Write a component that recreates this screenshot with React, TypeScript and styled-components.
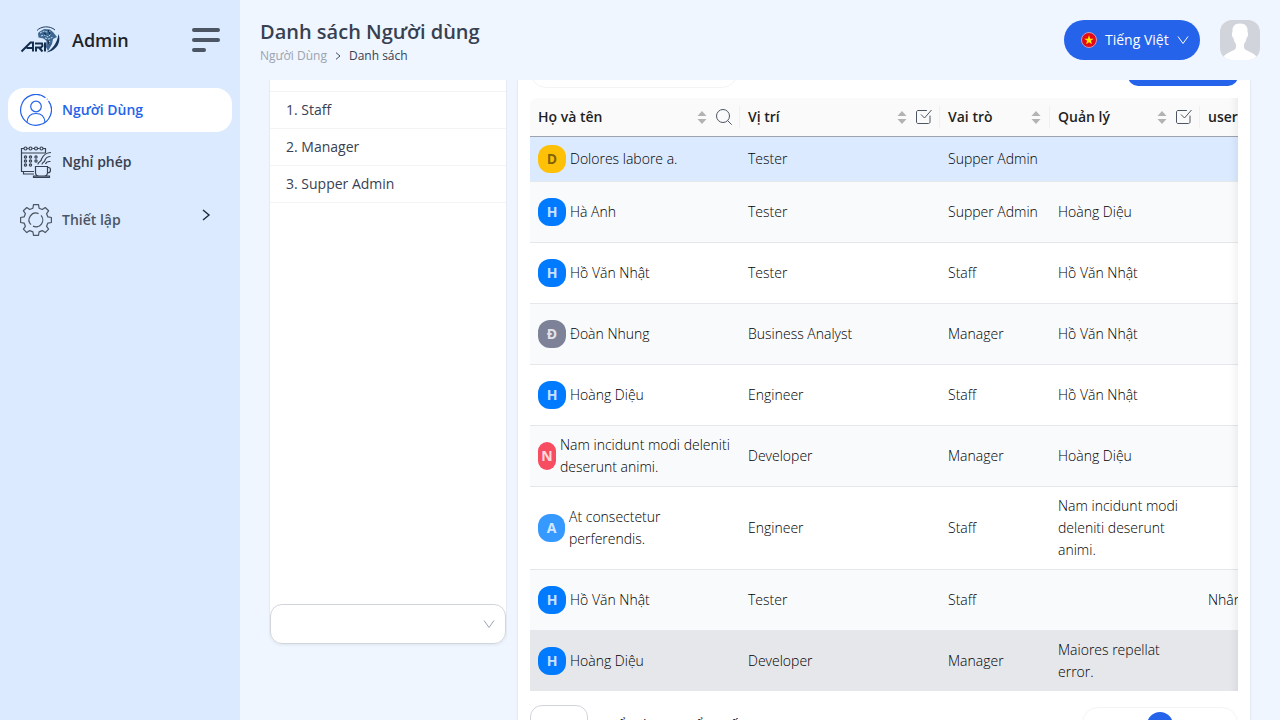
import React from "react";
import styled, { createGlobalStyle } from "styled-components";

const GlobalStyle = createGlobalStyle`
  *, *::before, *::after { box-sizing: border-box; }
  body {
    margin: 0;
    background: #eff6ff;
    color: #1f2937;
    font-family: "Open Sans", "Noto Sans", sans-serif;
    font-size: 14px;
    line-height: 22px;
  }
  button, select, input { font: inherit; color: inherit; }
  svg { display: block; flex: none; }
`;

const Shell = styled.div`
  display: flex;
  height: 100vh;
  overflow: hidden;
`;

const Sidebar = styled.aside`
  flex: none;
  width: 240px;
  background: #dbeafe;
`;

const Brand = styled.div`
  display: flex;
  align-items: center;
  height: 80px;
  padding: 0 20px;
  gap: 12px;
`;

const BrandName = styled.span`
  flex: 1;
  font-size: 18px;
  font-weight: 650;
  line-height: 28px;
  color: #1f2329;
`;

const MenuButton = styled.button`
  display: flex;
  flex-direction: column;
  gap: 6px;
  width: 28px;
  padding: 0;
  border: 0;
  background: none;
`;

const MenuBar = styled.span<{ $short?: boolean }>`
  width: ${(p) => (p.$short ? "14px" : "28px")};
  height: 4px;
  border-radius: 2px;
  background: #4b5563;
`;

const Nav = styled.nav`
  display: flex;
  flex-direction: column;
  gap: 8px;
  padding: 8px;
`;

const NavLink = styled.a<{ $active?: boolean; $tall?: boolean }>`
  display: flex;
  align-items: center;
  gap: 10px;
  height: ${(p) => (p.$tall ? "56px" : "44px")};
  padding: 0 20px 0 12px;
  border-radius: 16px;
  background: ${(p) => (p.$active ? "#ffffff" : "transparent")};
  color: ${(p) => (p.$active ? "#2563eb" : p.$tall ? "#4b5563" : "#374151")};
  font-weight: 650;
  text-decoration: none;
`;

const NavText = styled.span`
  flex: 1;
`;

const NavArrow = styled.span`
  align-self: flex-start;
  padding-top: 17px;
  color: #1f2937;
`;

const Main = styled.main`
  display: flex;
  flex: 1;
  flex-direction: column;
  min-width: 0;
`;

const Header = styled.header`
  display: flex;
  flex: none;
  align-items: center;
  justify-content: space-between;
  height: 80px;
  padding: 0 20px;
`;

const Heading = styled.div`
  padding-top: 4px;
`;

const Title = styled.h1`
  margin: 0;
  font-size: 20px;
  font-weight: 600;
  line-height: 28px;
  color: #374151;
`;

const Crumbs = styled.div`
  display: flex;
  align-items: center;
  gap: 7px;
  font-size: 12px;
  line-height: 20px;
  color: #374151;
`;

const CrumbLink = styled.a`
  color: #9ca3af;
  text-decoration: none;
`;

const HeaderTools = styled.div`
  display: flex;
  align-items: center;
  gap: 20px;
`;

const LanguageButton = styled.button`
  display: flex;
  align-items: center;
  gap: 8px;
  width: 136px;
  height: 40px;
  padding: 0 12px 0 17px;
  border: 0;
  border-radius: 20px;
  background: #2563eb;
  color: #ffffff;
`;

const LanguageName = styled.span`
  flex: 1;
  text-align: left;
  white-space: nowrap;
`;

const ProfileButton = styled.button`
  width: 40px;
  height: 40px;
  padding: 0;
  border: 0;
  border-radius: 12px;
  overflow: hidden;
  background: #d1d5db;
`;

const Content = styled.div`
  display: grid;
  flex: 1;
  grid-template-columns: 236px minmax(0, 1fr);
  align-items: start;
  gap: 12px;
  min-height: 0;
  padding: 0 30px;
  overflow: hidden;
`;

const Card = styled.section`
  background: #ffffff;
  box-shadow: 0 0 0 1px #e5ebf5, 0 1px 3px rgba(0, 0, 0, 0.08);
`;

const RoleCard = styled(Card)`
  display: flex;
  flex-direction: column;
  border-radius: 0 0 12px 12px;
`;

const RoleList = styled.ul`
  height: 524px;
  margin: 0;
  padding: 12px 0 0;
  list-style: none;
`;

const RoleItem = styled.li`
  padding: 8px 16px;
  border-bottom: 1px solid #f3f4f6;
  line-height: 20px;
  font-weight: 500;
  color: #374151;

  &:first-child { box-shadow: 0 -1px 0 #f3f4f6; }
`;

const SelectBox = styled.label<{ $wide?: boolean }>`
  display: flex;
  align-items: center;
  width: ${(p) => (p.$wide ? "100%" : "58px")};
  height: 40px;
  padding-right: 10px;
  border: 1px solid #d1d5db;
  border-radius: 12px;
  background: #ffffff;
  color: #9ca3af;

  select {
    flex: 1;
    min-width: 0;
    height: 100%;
    border: 0;
    background: none;
    appearance: none;
    outline: 0;
  }
`;

const UserCard = styled(Card)`
  padding: 0 12px 20px;
`;

const Toolbar = styled.div`
  display: flex;
  align-items: flex-end;
  justify-content: space-between;
  height: 8px;
  margin-bottom: 10px;
  overflow: hidden;
`;

const SearchInput = styled.input`
  width: 208px;
  height: 40px;
  border: 1px solid #f3f4f6;
  border-radius: 16px;
  background: #ffffff;
`;

const AddButton = styled.button`
  width: 110px;
  height: 36px;
  margin-bottom: 2px;
  border: 0;
  border-radius: 10px;
  background: #2563eb;
`;

const TableFrame = styled.div`
  position: relative;
  overflow: hidden;
  border-radius: 8px 0 0 0;

  &::after {
    content: "";
    position: absolute;
    inset: 0 0 0 auto;
    width: 30px;
    box-shadow: inset -10px 0 8px -8px rgba(5, 5, 5, 0.07);
    pointer-events: none;
  }
`;

const Table = styled.table`
  width: 860px;
  table-layout: fixed;
  border-collapse: separate;
  border-spacing: 0;
`;

const HeadCell = styled.th`
  position: relative;
  height: 39px;
  padding: 0 8px;
  border-bottom: 1px solid #9ca3af;
  background: #fafafa;
  color: #1f1f1f;
  font-weight: 600;
  text-align: left;

  &:not(:last-child)::after {
    content: "";
    position: absolute;
    top: 8px;
    right: 0;
    width: 1px;
    height: 22px;
    background: #f0f0f0;
  }
`;

const HeadContent = styled.div`
  display: flex;
  align-items: center;
  gap: 8px;
`;

const HeadLabel = styled.span`
  flex: 1;
  white-space: nowrap;
`;

const IconButton = styled.button`
  padding: 0;
  border: 0;
  background: none;
  color: #4b5563;
`;

type Tone = "selected" | "striped" | "plain" | "hovered";

const tones: Record<Tone, string> = {
  selected: "#dbeafe",
  striped: "#f9fafb",
  plain: "#ffffff",
  hovered: "#e5e7eb",
};

const Row = styled.tr<{ $tone: Tone; $height: number }>`
  height: ${(p) => p.$height}px;
  background: ${(p) => tones[p.$tone]};
`;

const Cell = styled.td`
  padding: 8px;
  border-bottom: 1px solid #e5e7eb;
  color: #000000;
  font-weight: 300;
  vertical-align: middle;
  white-space: pre-line;

  tr:last-child > & { border-bottom: 0; }
`;

const Person = styled.div`
  display: flex;
  align-items: center;
  gap: 4px;
`;

const Initial = styled.span<{ $color: string; $width: number; $dark?: boolean }>`
  flex: none;
  width: ${(p) => p.$width}px;
  height: 28px;
  border-radius: 12px;
  background: ${(p) => p.$color};
  color: ${(p) => (p.$dark ? "rgba(0, 0, 0, 0.5)" : "rgba(255, 255, 255, 0.8)")};
  font-weight: 700;
  line-height: 28px;
  text-align: center;
`;

const Footer = styled.div`
  display: flex;
  align-items: center;
  gap: 16px;
  padding-top: 14px;
`;

const Summary = styled.span`
  flex: 1;
  color: #111827;
`;

const Pager = styled.div`
  display: flex;
  align-items: center;
  justify-content: space-between;
  width: 156px;
  height: 36px;
  padding: 0 12px;
  border: 1px solid #f3f4f6;
  border-radius: 16px;
`;

const PageButton = styled.button<{ $current?: boolean }>`
  display: grid;
  place-items: center;
  width: ${(p) => (p.$current ? "26px" : "16px")};
  height: 26px;
  padding: 0;
  border: 0;
  border-radius: 13px;
  background: ${(p) => (p.$current ? "#2563eb" : "transparent")};
  color: #93c5fd;
`;

const Chevron = ({ d, size = 12, width = 1 }: { d: string; size?: number; width?: number }) => (
  <svg width={size} height={size} viewBox="0 0 12 12" fill="none" stroke="currentColor" strokeWidth={width}>
    <path d={d} />
  </svg>
);

const DOWN = "M1 2.5 6 9.5 11 2.5";
const RIGHT = "M3 1 9 6 3 11";

const Logo = () => (
  <svg width="40" height="28" viewBox="0 0 40 28" fill="none">
    <path d="M17 4.500C21 0 30 -.5 35 4" stroke="#1b3c66" strokeWidth="1" />
    <path d="M38.500 8c3 8-2 17-12 18.500 6-3.500 10.500-9 12-18.500Z" fill="#17375f" />
    <path d="M19 6 24 3l6 .5 3 2.500 4 5-4 2-1 5-4 7-2-4 .5-6-3-2.500-5-1-.5-4Z" fill="#3f6690" />
    <path d="m20 7 4-2 3 1 4-1M21 10l4-1 3 2 3-3M25 12l4 1 4-2M28 15l3 1M28 19l2-2" stroke="#b6e0f3" strokeWidth="1" strokeDasharray="2 1" />
    <path d="m24 7 2 2m2-5 2 4m-2 6 1 5" stroke="#14304f" strokeWidth="1.200" />
    <path d="m1.500 25.500 9-9h2.500v9M6.500 22h6" stroke="#142e50" strokeWidth="2" />
    <path d="M16 25.500v-4h5l1.500-1.500-.5-2.500h-7M19 21.500l3.500 4M25 16.500v9" stroke="#142e50" strokeWidth="2" />
  </svg>
);

const UserIcon = () => (
  <svg width="32" height="32" viewBox="0 0 32 32" fill="none" stroke="currentColor" strokeWidth="1.200">
    <path d="M25.500 3.700A15.400 15.400 0 1 0 28.500 6.800M26.900 4.900l.5.500" />
    <circle cx="16" cy="12.500" r="5.300" />
    <path d="M7 28.200c.5-5.600 4-8.700 9-8.700s8.500 3.100 9 8.700" />
  </svg>
);

const LeaveIcon = () => (
  <svg width="32" height="32" viewBox="0 0 32 32" fill="none" stroke="currentColor" strokeWidth="1.200">
    <path d="M4 2.500H1.500v23H14M1.500 7h24M25.500 7V2.500H23M3.500 26v2H14M7 2.500h1.500m4 0H14m4 0h1.500" />
    <circle cx="5.500" cy="2.500" r="1.500" />
    <circle cx="10.500" cy="2.500" r="1.500" />
    <circle cx="16" cy="2.500" r="1.500" />
    <circle cx="21.500" cy="2.500" r="1.500" />
    {[11, 15, 19].map((y) =>
      [5.5, 10.5, 16].map((x) =>
        x === 16 && y === 19 ? null : <circle key={`${x}-${y}`} cx={x} cy={y} r="1.100" />
      )
    )}
    <path d="M15.500 20.500h12v6c0 2-1.500 3.500-3.500 3.500h-5c-2 0-3.500-1.500-3.500-3.500v-6ZM27.500 21.500h1c1.500 0 2 1 2 2.500s-1 3-3 3M13.500 30h16v1.300h-16V30Z" />
    <path d="M18 18.500c-.5-3 4-2.500 3.500-5.500 2-4 4-6.500 9.500-6.500M22 18.500c0-2.500 3-2 3-4.500 1-2.500 2.500-3.500 5.500-3.500M25.500 18c1-3 2.500-2.500 5-2.500" />
  </svg>
);

const GearIcon = () => (
  <svg width="32" height="32" viewBox="0 0 32 32" fill="none" stroke="currentColor" strokeWidth="1.200" strokeLinejoin="round">
    <path d="M13.500 .7h5l.6 3.500 3.200 1.300 2.900-2 3.400 3.300-2 2.900 1.300 3.200 3.500.6v5l-3.500.6-1.300 3.200 2 2.900-3.400 3.400-2.900-2-3.200 1.300-.6 3.400h-5l-.6-3.400-3.200-1.300-2.900 2-3.400-3.400 2-2.900-1.300-3.200-3.500-.6v-5l3.500-.6 1.300-3.200-2-2.900L6.800 3.500l2.900 2 3.200-1.300.6-3.500Z" />
    <path d="M18.500 9.600A6.800 6.800 0 0 0 11 20.600M13 22.100a6.800 6.800 0 0 0 8-10.700" />
  </svg>
);

const FlagIcon = () => (
  <svg width="16" height="16" viewBox="0 0 16 16">
    <circle cx="8" cy="8" r="7.500" fill="#e60a17" stroke="#c99ab4" />
    <path d="m8 3.300 1.200 3.400h3.500L9.900 8.800l1 3.500L8 10.200l-2.900 2.100 1-3.500-2.800-2.100h3.500L8 3.300Z" fill="#ffed00" />
  </svg>
);

const ProfileImage = () => (
  <svg width="40" height="40" viewBox="0 0 40 40" fill="#ffffff">
    <path d="M20 3.500c-5.500 0-8 3-7.500 8.500-1.300 1-.4 5.500 1 6 .3 3 1.300 4.500 2.500 6v4c-2 3.500-10 4-12.500 9L3 40h34l-.5-3c-2.500-5-10.500-5.500-12.500-9v-4c1.200-1.500 2.200-3 2.500-6 1.400-.5 2.300-5 1-6C28 6.500 25.500 3.500 20 3.500Z" />
  </svg>
);

const SortIcon = () => (
  <svg width="12" height="13" viewBox="0 0 12 13" fill="#b3b3b3">
    <path d="M6 0 10.500 5h-9ZM1.500 8h9L6 13Z" />
  </svg>
);

const SearchIcon = () => (
  <svg width="16" height="16" viewBox="0 0 16 16" fill="none" stroke="currentColor">
    <circle cx="7" cy="7" r="6.500" />
    <path d="m11.700 11.700 4 4" />
  </svg>
);

const CheckIcon = () => (
  <svg width="16" height="16" viewBox="0 0 16 16" fill="none" stroke="currentColor">
    <path d="M10.500 1.500h-8.500c-.8 0-1.500.7-1.500 1.500v10c0 .8.7 1.500 1.500 1.500h10.500c.8 0 1.500-.7 1.500-1.500V7" strokeLinecap="round" />
    <path d="m5 5.500 3.500 3.500 7-8" />
  </svg>
);

const columns = [
  { label: "Họ và tên", width: 210, sort: true, filter: "search" },
  { label: "Vị trí", width: 200, sort: true, filter: "check" },
  { label: "Vai trò", width: 110, sort: true },
  { label: "Quản lý", width: 150, sort: true, filter: "check" },
  { label: "user.", width: 190 },
];

interface User {
  initial: string;
  color: string;
  avatar?: number;
  dark?: boolean;
  name: string;
  position: string;
  role: string;
  manager: string;
  extra?: string;
  tone: Tone;
  height: number;
}

const BLUE = "#007bff";

const users: User[] = [
  { initial: "D", color: "#ffc107", dark: true, name: "Dolores labore a.", position: "Tester", role: "Supper Admin", manager: "", tone: "selected", height: 45 },
  { initial: "H", color: BLUE, name: "Hà Anh", position: "Tester", role: "Supper Admin", manager: "Hoàng Diệu", tone: "striped", height: 61 },
  { initial: "H", color: BLUE, name: "Hồ Văn Nhật", position: "Tester", role: "Staff", manager: "Hồ Văn Nhật", tone: "plain", height: 61 },
  { initial: "Đ", color: "#7e8299", name: "Đoàn Nhung", position: "Business Analyst", role: "Manager", manager: "Hồ Văn Nhật", tone: "striped", height: 61 },
  { initial: "H", color: BLUE, name: "Hoàng Diệu", position: "Engineer", role: "Staff", manager: "Hồ Văn Nhật", tone: "plain", height: 61 },
  { initial: "N", color: "#f64e60", avatar: 18, name: "Nam incidunt modi deleniti\ndeserunt animi.", position: "Developer", role: "Manager", manager: "Hoàng Diệu", tone: "striped", height: 61 },
  { initial: "A", color: "#3699ff", avatar: 27, name: "At consectetur\nperferendis.", position: "Engineer", role: "Staff", manager: "Nam incidunt modi\ndeleniti deserunt\nanimi.", tone: "plain", height: 83 },
  { initial: "H", color: BLUE, name: "Hồ Văn Nhật", position: "Tester", role: "Staff", manager: "", extra: "Nhân viên", tone: "striped", height: 61 },
  { initial: "H", color: BLUE, name: "Hoàng Diệu", position: "Developer", role: "Manager", manager: "Maiores repellat\nerror.", tone: "hovered", height: 60 },
];

export default function App() {
  return (
    <>
      <GlobalStyle />
      <Shell>
        <Sidebar>
          <Brand>
            <Logo />
            <BrandName>Admin</BrandName>
            <MenuButton aria-label="Menu">
              <MenuBar />
              <MenuBar />
              <MenuBar $short />
            </MenuButton>
          </Brand>
          <Nav>
            <NavLink href="#users" $active>
              <UserIcon />
              <NavText>Người Dùng</NavText>
            </NavLink>
            <NavLink href="#leave">
              <LeaveIcon />
              <NavText>Nghỉ phép</NavText>
            </NavLink>
            <NavLink href="#settings" $tall>
              <GearIcon />
              <NavText>Thiết lập</NavText>
              <NavArrow>
                <Chevron d={RIGHT} width={1.4} />
              </NavArrow>
            </NavLink>
          </Nav>
        </Sidebar>
        <Main>
          <Header>
            <Heading>
              <Title>Danh sách Người dùng</Title>
              <Crumbs>
                <CrumbLink href="#users">Người Dùng</CrumbLink>
                <Chevron d={RIGHT} size={8} width={1.4} />
                <span>Danh sách</span>
              </Crumbs>
            </Heading>
            <HeaderTools>
              <LanguageButton>
                <FlagIcon />
                <LanguageName>Tiếng Việt</LanguageName>
                <Chevron d={DOWN} />
              </LanguageButton>
              <ProfileButton aria-label="Profile">
                <ProfileImage />
              </ProfileButton>
            </HeaderTools>
          </Header>
          <Content>
            <RoleCard>
              <RoleList>
                <RoleItem>1. Staff</RoleItem>
                <RoleItem>2. Manager</RoleItem>
                <RoleItem>3. Supper Admin</RoleItem>
              </RoleList>
              <SelectBox $wide>
                <select aria-label="Role" />
                <Chevron d={DOWN} />
              </SelectBox>
            </RoleCard>
            <UserCard>
              <Toolbar>
                <SearchInput aria-label="Search" />
                <AddButton aria-label="Add" />
              </Toolbar>
              <TableFrame>
                <Table>
                  <colgroup>
                    {columns.map((c) => (
                      <col key={c.label} width={c.width} />
                    ))}
                  </colgroup>
                  <thead>
                    <tr>
                      {columns.map((c) => (
                        <HeadCell key={c.label} scope="col">
                          <HeadContent>
                            <HeadLabel>{c.label}</HeadLabel>
                            {c.sort && (
                              <IconButton aria-label="Sort">
                                <SortIcon />
                              </IconButton>
                            )}
                            {c.filter && (
                              <IconButton aria-label="Filter">
                                {c.filter === "search" ? <SearchIcon /> : <CheckIcon />}
                              </IconButton>
                            )}
                          </HeadContent>
                        </HeadCell>
                      ))}
                    </tr>
                  </thead>
                  <tbody>
                    {users.map((u, i) => (
                      <Row key={i} $tone={u.tone} $height={u.height}>
                        <Cell>
                          <Person>
                            <Initial $color={u.color} $width={u.avatar ?? 28} $dark={u.dark}>
                              {u.initial}
                            </Initial>
                            <span>{u.name}</span>
                          </Person>
                        </Cell>
                        <Cell>{u.position}</Cell>
                        <Cell>{u.role}</Cell>
                        <Cell>{u.manager}</Cell>
                        <Cell>{u.extra}</Cell>
                      </Row>
                    ))}
                  </tbody>
                </Table>
              </TableFrame>
              <Footer>
                <SelectBox>
                  <select aria-label="Page size" />
                </SelectBox>
                <Summary>Hiển thị 1 - 9 tổng số</Summary>
                <Pager>
                  <PageButton aria-label="First page">
                    <Chevron d="M6 1 1 6l5 5M11 1 6 6l5 5" size={10} />
                  </PageButton>
                  <PageButton aria-label="Previous page">
                    <Chevron d="M9 1 3 6l6 5" size={10} />
                  </PageButton>
                  <PageButton $current aria-label="Page 1" />
                  <PageButton aria-label="Next page">
                    <Chevron d={RIGHT} size={10} />
                  </PageButton>
                  <PageButton aria-label="Last page">
                    <Chevron d="m1 1 5 5-5 5M6 1l5 5-5 5" size={10} />
                  </PageButton>
                </Pager>
              </Footer>
            </UserCard>
          </Content>
        </Main>
      </Shell>
    </>
  );
}
